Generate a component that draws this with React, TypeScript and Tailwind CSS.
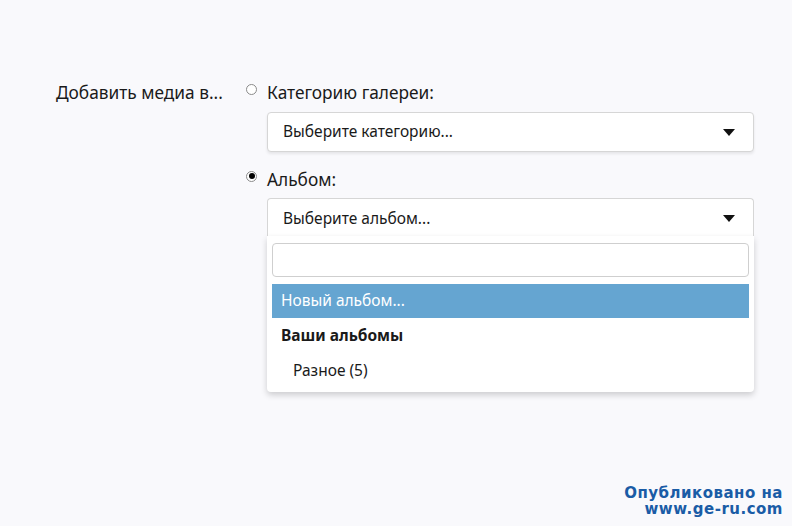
import { useState } from 'react';

function Caret() {
  return (
    <svg width="12" height="7" viewBox="0 0 12 7" className="shrink-0">
      <path d="M0 0 L12 0 L6 7 Z" fill="#111" />
    </svg>
  );
}

function Radio({ checked }: { checked?: boolean }) {
  return (
    <span className="flex h-[11px] w-[11px] items-center justify-center rounded-full border border-[#8a8a8a] bg-white">
      {checked && <span className="h-[6px] w-[6px] rounded-full bg-black" />}
    </span>
  );
}

export default function App() {
  const [target] = useState<'category' | 'album'>('album');

  return (
    <div
      className="relative h-[526px] w-[792px] overflow-hidden bg-[#f9f9fc] text-[15.5px] text-[#1a1a1a]"
      style={{ fontFamily: '"Noto Sans", "Open Sans", sans-serif' }}
    >
      <div className="flex pt-[80px] pl-[56px]">
        <div className="w-[190px] pt-[1px] text-[17.3px] leading-[24px]">Добавить медиа в...</div>

        <div className="flex w-[508px] flex-col">
          {/* категория */}
          <label className="flex h-[26px] items-center">
            <span className="-mt-[8px] mr-[10px] ml-0">
              <Radio checked={target === 'category'} />
            </span>
            <span className="text-[17.3px]">Категорию галереи:</span>
          </label>
          <div className="mt-[6px] ml-[21px] flex h-[40px] items-center justify-between rounded-[4px] border border-[#d6d6d6] bg-white pr-[18px] pl-[15px] shadow-[0_2px_3px_rgba(0,0,0,0.08)]">
            <span>Выберите категорию...</span>
            <Caret />
          </div>

          {/* альбом */}
          <label className="mt-[15px] flex h-[26px] items-center">
            <span className="-mt-[8px] mr-[10px] ml-0">
              <Radio checked={target === 'album'} />
            </span>
            <span className="text-[17.3px]">Альбом:</span>
          </label>
          <div className="relative mt-[5px] ml-[21px]">
            <div className="flex h-[40px] items-center justify-between rounded-t-[4px] border border-b-0 border-[#d6d6d6] bg-white pr-[18px] pl-[15px]">
              <span>Выберите альбом...</span>
              <Caret />
            </div>
            <div className="absolute top-[38px] right-0 left-0 rounded-b-[4px] bg-white px-[5px] pt-[7px] pb-[4px] shadow-[0_3px_6px_rgba(0,0,0,0.18)]">
              <div className="h-[34px] rounded-[4px] border border-[#cfcfcf] bg-white" />
              <div className="mt-[7px] flex h-[34px] items-center bg-[#65a5d1] pl-[9px] text-white">Новый альбом...</div>
              <div className="flex h-[36px] items-center pl-[9px] font-bold">Ваши альбомы</div>
              <div className="flex h-[34px] items-center pl-[21px]">Разное (5)</div>
            </div>
          </div>
        </div>
      </div>

      <div
        className="absolute right-[9px] bottom-[9px] text-right text-[15px] leading-[16px] font-bold tracking-[0.5px] text-[#1a5ca6]"
        style={{ fontFamily: '"DejaVu Sans", Verdana, sans-serif' }}
      >
        <div>Опубликовано на</div>
        <div>www.ge-ru.com</div>
      </div>
    </div>
  );
}
